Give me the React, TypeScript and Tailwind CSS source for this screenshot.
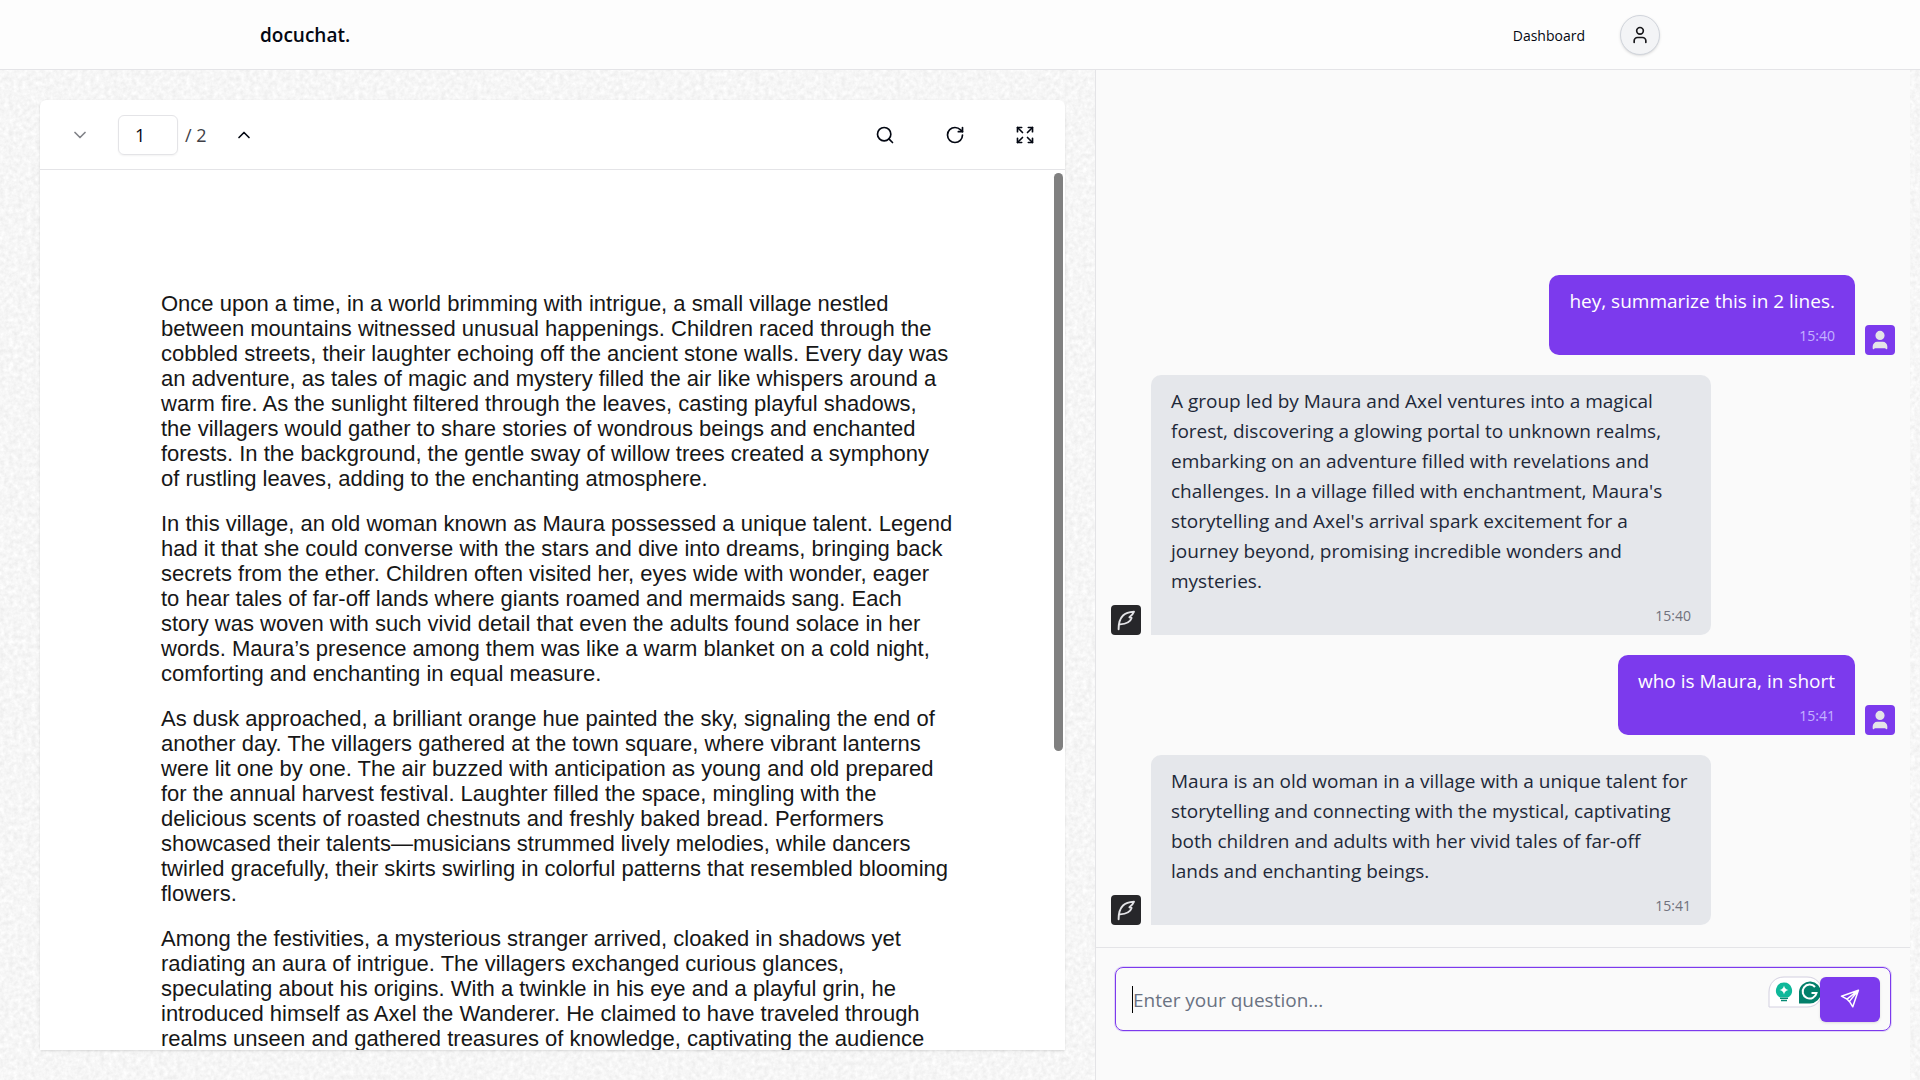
import { ChevronDown, ChevronUp, Expand, RotateCw, Search, User } from "lucide-react";

type Message = { from: "user" | "bot"; time: string; lines: string[] };

const paragraphs: string[][] = [
  [
    "Once upon a time, in a world brimming with intrigue, a small village nestled",
    "between mountains witnessed unusual happenings. Children raced through the",
    "cobbled streets, their laughter echoing off the ancient stone walls. Every day was",
    "an adventure, as tales of magic and mystery filled the air like whispers around a",
    "warm fire. As the sunlight filtered through the leaves, casting playful shadows,",
    "the villagers would gather to share stories of wondrous beings and enchanted",
    "forests. In the background, the gentle sway of willow trees created a symphony",
    "of rustling leaves, adding to the enchanting atmosphere.",
  ],
  [
    "In this village, an old woman known as Maura possessed a unique talent. Legend",
    "had it that she could converse with the stars and dive into dreams, bringing back",
    "secrets from the ether. Children often visited her, eyes wide with wonder, eager",
    "to hear tales of far-off lands where giants roamed and mermaids sang. Each",
    "story was woven with such vivid detail that even the adults found solace in her",
    "words. Maura’s presence among them was like a warm blanket on a cold night,",
    "comforting and enchanting in equal measure.",
  ],
  [
    "As dusk approached, a brilliant orange hue painted the sky, signaling the end of",
    "another day. The villagers gathered at the town square, where vibrant lanterns",
    "were lit one by one. The air buzzed with anticipation as young and old prepared",
    "for the annual harvest festival. Laughter filled the space, mingling with the",
    "delicious scents of roasted chestnuts and freshly baked bread. Performers",
    "showcased their talents—musicians strummed lively melodies, while dancers",
    "twirled gracefully, their skirts swirling in colorful patterns that resembled blooming",
    "flowers.",
  ],
  [
    "Among the festivities, a mysterious stranger arrived, cloaked in shadows yet",
    "radiating an aura of intrigue. The villagers exchanged curious glances,",
    "speculating about his origins. With a twinkle in his eye and a playful grin, he",
    "introduced himself as Axel the Wanderer. He claimed to have traveled through",
    "realms unseen and gathered treasures of knowledge, captivating the audience",
  ],
];

const messages: Message[] = [
  { from: "user", time: "15:40", lines: ["hey, summarize this in 2 lines."] },
  {
    from: "bot",
    time: "15:40",
    lines: [
      "A group led by Maura and Axel ventures into a magical",
      "forest, discovering a glowing portal to unknown realms,",
      "embarking on an adventure filled with revelations and",
      "challenges. In a village filled with enchantment, Maura's",
      "storytelling and Axel's arrival spark excitement for a",
      "journey beyond, promising incredible wonders and",
      "mysteries.",
    ],
  },
  { from: "user", time: "15:41", lines: ["who is Maura, in short"] },
  {
    from: "bot",
    time: "15:41",
    lines: [
      "Maura is an old woman in a village with a unique talent for",
      "storytelling and connecting with the mystical, captivating",
      "both children and adults with her vivid tales of far-off",
      "lands and enchanting beings.",
    ],
  },
];

function Grain() {
  return (
    <svg className="pointer-events-none absolute inset-0 h-full w-full" aria-hidden="true">
      <filter id="grain" x="0" y="0" width="100%" height="100%" colorInterpolationFilters="sRGB">
        <feTurbulence type="fractalNoise" baseFrequency="0.22" numOctaves="3" seed="4" stitchTiles="stitch" />
        <feColorMatrix values="0.1 0 0 0 0.915  0.1 0 0 0 0.915  0.1 0 0 0 0.915  0 0 0 0 1" />
      </filter>
      <rect width="100%" height="100%" filter="url(#grain)" />
    </svg>
  );
}

function Quill() {
  return (
    <svg viewBox="0 0 30 30" className="size-[30px]" fill="none" stroke="#e4e4e7" strokeWidth="1.9" strokeLinecap="round" strokeLinejoin="round" aria-hidden="true">
      <path d="M7.600 24.200C7.600 18 9 13.500 12 10.500C14.700 7.800 18.500 6.900 23 6.700C22.300 8.500 20.800 10.600 18.400 12.300L20.600 13C19.600 16.200 16.500 18.900 9 19.400" />
    </svg>
  );
}

function PaperPlane() {
  return (
    <svg viewBox="0 0 20 20" className="size-5" fill="none" stroke="white" strokeWidth="1.5" strokeLinejoin="round" aria-hidden="true">
      <path d="M18.400 1.200L1.500 7.200L7 10.200L18.400 1.200L9.400 12.400L12.800 17.800Z" />
      <path d="M7 10.200L9.400 12.400" />
    </svg>
  );
}

function AssistantBadge() {
  return (
    <svg viewBox="0 0 56 32" className="h-8 w-14" aria-hidden="true">
      <path d="M1 31V16C1 7.500 7 1 16 1H39C48 1 54 7.500 54 16S48 31 39 31Z" fill="white" stroke="#d3d0e0" />
      <path d="M16 6.500A8 8 0 0 0 11.600 21.200H20.400A8 8 0 0 0 16 6.500Z" fill="#0fb89a" />
      <path d="M12 22.200H20M13 24.500H19" stroke="#078a74" strokeWidth="1.6" />
      <path d="M16 9.500Q16.700 13.300 20.500 14Q16.700 14.700 16 18.500Q15.300 14.700 11.500 14Q15.300 13.300 16 9.500Z" fill="white" />
      <path d="M31 27.500V15.500A11 11 0 1 1 42 27.500Z" fill="#04806b" />
      <path d="M47 11A7 7 0 1 0 48.500 17H43.500" fill="none" stroke="white" strokeWidth="2" />
    </svg>
  );
}

function ChatMessage({ message }: { message: Message }) {
  const mine = message.from === "user";
  return (
    <li className={mine ? "flex items-end justify-end gap-2.5" : "flex flex-row-reverse items-end justify-end gap-2.5"}>
      <div
        className={
          mine
            ? "rounded-[10px] rounded-br-none bg-[#7c3aed] px-5 pt-[11px] pb-[9px] text-white"
            : "w-[560px] rounded-[10px] rounded-bl-none bg-gray-200 px-5 pt-[11px] pb-[9px] text-gray-800"
        }
      >
        <p className="text-[19px] leading-[30px] whitespace-nowrap">
          {message.lines.map((line) => (
            <span key={line} className="block">{line}</span>
          ))}
        </p>
        <time className={mine ? "mt-2.5 block text-right text-sm text-violet-300" : "mt-2.5 block text-right text-sm text-zinc-500"}>
          {message.time}
        </time>
      </div>
      {mine ? (
        <span className="flex size-[30px] shrink-0 items-center justify-center rounded bg-[#7c3aed]">
          <User size={22} className="fill-zinc-200 text-zinc-200" />
        </span>
      ) : (
        <span className="size-[30px] shrink-0 rounded bg-zinc-800">
          <Quill />
        </span>
      )}
    </li>
  );
}

export default function App() {
  return (
    <div className="relative flex h-screen flex-col overflow-hidden bg-[#f7f7f7] font-['Open_Sans',sans-serif] text-gray-950">
      <Grain />
      <header className="relative h-[70px] shrink-0 border-b border-zinc-200 bg-[#fdfdfd]">
        <div className="mx-auto flex h-full max-w-[1400px] items-center justify-between">
          <a href="#home" className="pt-0.5 text-[19px] font-semibold">docuchat.</a>
          <nav className="flex items-center gap-[35px]">
            <a href="#dashboard" className="pt-0.5 text-sm font-medium">Dashboard</a>
            <button type="button" aria-label="Account" className="flex size-10 items-center justify-center rounded-full border border-gray-300 bg-gray-100 shadow-sm">
              <User size={20} className="text-zinc-900" />
            </button>
          </nav>
        </div>
      </header>

      <main className="relative grid min-h-0 flex-1 grid-cols-[1095fr_815fr] pr-2.5">
        <div className="flex min-h-0 min-w-0 py-[30px] pr-[30px] pl-10">
          <section aria-label="Document" className="relative flex min-w-0 flex-1 flex-col rounded-t-md bg-white shadow">
            <div className="flex h-[70px] shrink-0 items-center justify-between border-b border-zinc-200 px-[15px]">
              <div className="flex items-center">
                <button type="button" aria-label="Previous page" disabled className="flex h-[45px] w-[50px] items-center justify-center opacity-50">
                  <ChevronDown size={20} />
                </button>
                <input
                  aria-label="Page number"
                  defaultValue="1"
                  className="mr-[7px] ml-[13px] h-10 w-[60px] rounded-md border border-zinc-200 px-4 text-lg shadow-xs outline-none"
                />
                <p className="mr-3 text-lg text-zinc-700">/ 2</p>
                <button type="button" aria-label="Next page" className="flex h-[45px] w-[50px] items-center justify-center">
                  <ChevronUp size={20} />
                </button>
              </div>
              <div className="flex items-center gap-5">
                <button type="button" aria-label="Search" className="flex h-[45px] w-[50px] items-center justify-center">
                  <Search size={20} />
                </button>
                <button type="button" aria-label="Rotate" className="flex h-[45px] w-[50px] items-center justify-center">
                  <RotateCw size={20} />
                </button>
                <button type="button" aria-label="Full screen" className="flex h-[45px] w-[50px] items-center justify-center">
                  <Expand size={20} />
                </button>
              </div>
            </div>
            <div className="relative min-h-0 flex-1 overflow-hidden">
              <article className="flex flex-col gap-5 px-[121px] pt-[121px] font-['Liberation_Sans',sans-serif] text-[22px] leading-[25px] whitespace-nowrap text-neutral-900">
                {paragraphs.map((lines) => (
                  <p key={lines[0]}>
                    {lines.map((line) => (
                      <span key={line} className="block">{line}</span>
                    ))}
                  </p>
                ))}
              </article>
              <div className="absolute top-[3px] right-0.5 h-[578px] w-[9px] rounded-full bg-[#808080]" />
            </div>
          </section>
        </div>

        <section aria-label="Chat" className="flex min-h-0 min-w-0 flex-col border-l border-zinc-200 bg-[#fafafa]">
          <ul className="flex min-h-0 flex-1 flex-col justify-end gap-5 px-[15px] pb-[22px]">
            {messages.map((message, index) => (
              <ChatMessage key={index} message={message} />
            ))}
          </ul>
          <form className="border-t border-zinc-200 px-[19px] pt-[19px] pb-[49px]" onSubmit={(event) => event.preventDefault()}>
            <div className="relative flex h-16 items-center rounded-lg border border-[#7c3aed] pr-2.5 pl-4 ring-1 ring-[#7c3aed]/20">
              <span className="h-[27px] w-px shrink-0 bg-black" />
              <input
                aria-label="Question"
                placeholder="Enter your question..."
                className="min-w-0 flex-1 bg-transparent pt-0.5 text-[19px] outline-none placeholder:text-gray-500"
              />
              <div className="absolute top-2 right-[66px]">
                <AssistantBadge />
              </div>
              <button type="submit" aria-label="Send" className="relative flex h-[45px] w-[60px] items-center justify-center rounded-md bg-[#7c3aed] shadow-sm">
                <PaperPlane />
              </button>
            </div>
          </form>
        </section>
      </main>
    </div>
  );
}
